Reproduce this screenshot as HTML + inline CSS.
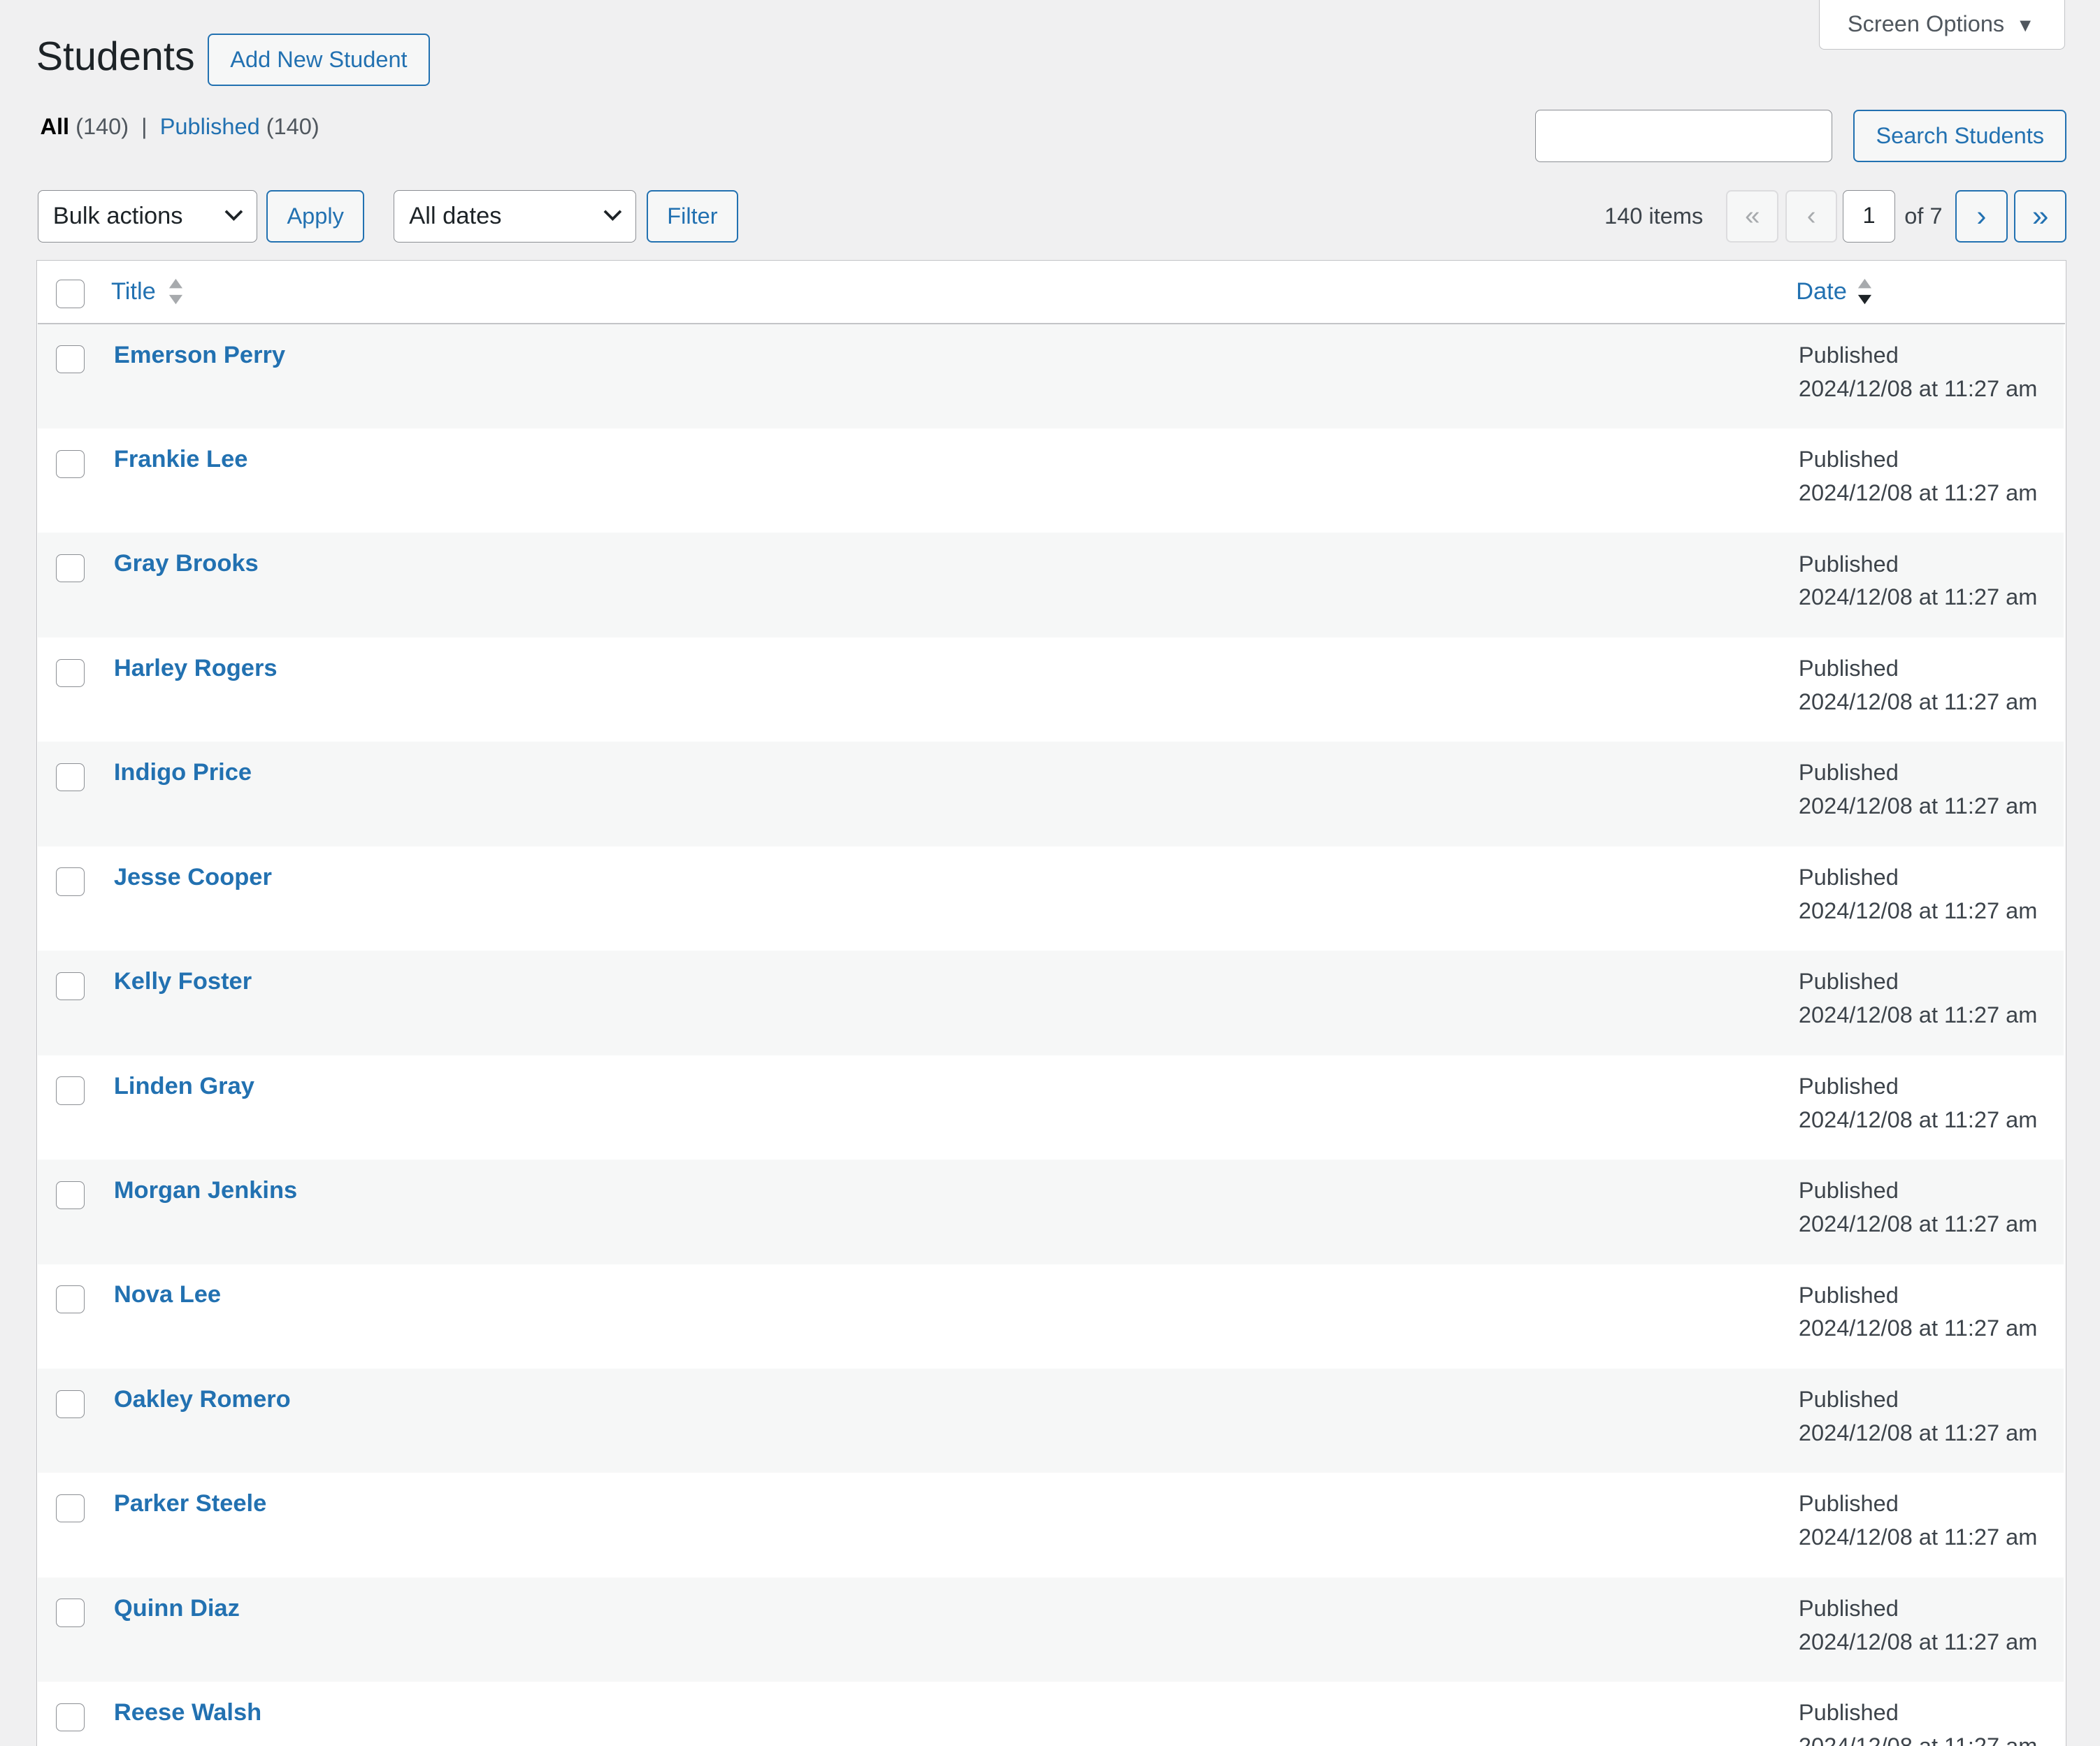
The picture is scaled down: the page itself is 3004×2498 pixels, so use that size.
<!DOCTYPE html>
<html><head><meta charset="utf-8">
<style>
html,body{margin:0;padding:0;background:#f0f0f1;overflow:hidden}
body{width:3004px;height:2498px}
#w{zoom:1.9158;width:1568px;height:1304px;position:relative;font-family:"Liberation Sans",Arial,sans-serif;font-size:17px;color:#3c434a;overflow:hidden}
.a{position:absolute}
.btn{position:absolute;box-sizing:border-box;border:1.2px solid #2271b1;background:#f6f7f7;color:#2271b1;border-radius:4px;height:39px;display:flex;align-items:center;justify-content:center;font-size:17px}
.dis{border-color:#dcdcde;color:#a7aaad}
.sel{position:absolute;box-sizing:border-box;border:1px solid #8c8f94;background:#fff;border-radius:4px;height:39px;color:#1d2327;font-size:18px;display:flex;align-items:center;padding-left:11px}
.sel svg{position:absolute;right:10px;top:13px}
.cb{position:absolute;box-sizing:border-box;width:21px;height:21px;border:1px solid #8c8f94;border-radius:4px;background:#fff}
.row{position:absolute;left:28px;width:1513px;height:78px}
.nm{position:absolute;left:57px;top:13px;font-weight:bold;color:#2271b1;font-size:18px}
.dt{position:absolute;left:1315px;top:11px;line-height:25px;font-size:17px;color:#3c434a}
</style></head><body><div id="w">
<div class="a" style="left:1358px;top:-5px;width:184px;height:42px;box-sizing:border-box;border:1px solid #c3c4c7;border-top:none;background:#fff;border-radius:0 0 4px 4px;color:#50575e;font-size:17px;line-height:46px;padding-left:21px">Screen Options <span style="font-size:14px;margin-left:4px">▼</span></div>
<div class="a" style="left:27px;top:25px;font-size:30px;color:#1d2327">Students</div>
<div class="btn" style="left:155px;top:25px;width:166px">Add New Student</div>
<div class="a" style="left:30px;top:85px;font-size:17px;color:#50575e"><b style="color:#000">All</b> (140) &nbsp;|&nbsp; <span style="color:#2271b1">Published</span> (140)</div>
<div class="a" style="left:1146px;top:82px;width:222px;height:39px;box-sizing:border-box;border:1px solid #8c8f94;border-radius:4px;background:#fff"></div>
<div class="btn" style="left:1384px;top:82px;width:159px">Search Students</div>
<div class="sel" style="left:28px;top:142px;width:164px">Bulk actions<svg width="14" height="10" viewBox="0 0 14 10"><path d="M1 2l6 6 6-6" fill="none" stroke="#1d2327" stroke-width="2"/></svg></div>
<div class="btn" style="left:199px;top:142px;width:73px">Apply</div>
<div class="sel" style="left:294px;top:142px;width:181px">All dates<svg width="14" height="10" viewBox="0 0 14 10"><path d="M1 2l6 6 6-6" fill="none" stroke="#1d2327" stroke-width="2"/></svg></div>
<div class="btn" style="left:483px;top:142px;width:68px">Filter</div>
<div class="a" style="left:1198px;top:152px;font-size:17px;color:#3c434a">140 items</div>
<div class="btn dis" style="left:1289px;top:142px;width:39px;font-size:20px">«</div>
<div class="btn dis" style="left:1333px;top:142px;width:39px;font-size:20px">‹</div>
<div class="a" style="left:1376px;top:142px;width:39px;height:39px;box-sizing:border-box;border:1px solid #8c8f94;border-radius:4px;background:#fff;text-align:center;line-height:37px;color:#1d2327;font-size:17px">1</div>
<div class="a" style="left:1422px;top:152px;font-size:17px">of 7</div>
<div class="btn" style="left:1460px;top:142px;width:39px;font-size:22px">›</div>
<div class="btn" style="left:1504px;top:142px;width:39px;font-size:22px">»</div>
<div class="a" style="left:27px;top:194px;width:1516px;height:1110px;box-sizing:border-box;border:1px solid #c3c4c7;border-bottom:none;background:#fff"></div>
<div class="a" style="left:28px;top:241px;width:1514px;height:1px;background:#c3c4c7"></div>
<div class="cb" style="left:42px;top:209px"></div>
<div class="a" style="left:83px;top:208px;color:#2271b1;font-size:18px">Title</div>
<svg class="a" style="left:125px;top:207px" width="13" height="22" viewBox="0 0 13 22"><path d="M6.5 1l5 7h-10z" fill="#a7aaad"/><path d="M6.5 20l5-7h-10z" fill="#a7aaad"/></svg>
<div class="a" style="left:1341px;top:208px;color:#2271b1;font-size:18px">Date</div>
<svg class="a" style="left:1386px;top:207px" width="13" height="22" viewBox="0 0 13 22"><path d="M6.5 1l5 7h-10z" fill="#a7aaad"/><path d="M6.5 20l5-7h-10z" fill="#1d2327"/></svg>
<div class="row" style="top:242px;background:#f6f7f7"><div class="cb" style="left:14px;top:16px"></div><div class="nm">Emerson Perry</div><div class="dt">Published<br>2024/12/08 at 11:27 am</div></div>
<div class="row" style="top:320px"><div class="cb" style="left:14px;top:16px"></div><div class="nm">Frankie Lee</div><div class="dt">Published<br>2024/12/08 at 11:27 am</div></div>
<div class="row" style="top:398px;background:#f6f7f7"><div class="cb" style="left:14px;top:16px"></div><div class="nm">Gray Brooks</div><div class="dt">Published<br>2024/12/08 at 11:27 am</div></div>
<div class="row" style="top:476px"><div class="cb" style="left:14px;top:16px"></div><div class="nm">Harley Rogers</div><div class="dt">Published<br>2024/12/08 at 11:27 am</div></div>
<div class="row" style="top:554px;background:#f6f7f7"><div class="cb" style="left:14px;top:16px"></div><div class="nm">Indigo Price</div><div class="dt">Published<br>2024/12/08 at 11:27 am</div></div>
<div class="row" style="top:632px"><div class="cb" style="left:14px;top:16px"></div><div class="nm">Jesse Cooper</div><div class="dt">Published<br>2024/12/08 at 11:27 am</div></div>
<div class="row" style="top:710px;background:#f6f7f7"><div class="cb" style="left:14px;top:16px"></div><div class="nm">Kelly Foster</div><div class="dt">Published<br>2024/12/08 at 11:27 am</div></div>
<div class="row" style="top:788px"><div class="cb" style="left:14px;top:16px"></div><div class="nm">Linden Gray</div><div class="dt">Published<br>2024/12/08 at 11:27 am</div></div>
<div class="row" style="top:866px;background:#f6f7f7"><div class="cb" style="left:14px;top:16px"></div><div class="nm">Morgan Jenkins</div><div class="dt">Published<br>2024/12/08 at 11:27 am</div></div>
<div class="row" style="top:944px"><div class="cb" style="left:14px;top:16px"></div><div class="nm">Nova Lee</div><div class="dt">Published<br>2024/12/08 at 11:27 am</div></div>
<div class="row" style="top:1022px;background:#f6f7f7"><div class="cb" style="left:14px;top:16px"></div><div class="nm">Oakley Romero</div><div class="dt">Published<br>2024/12/08 at 11:27 am</div></div>
<div class="row" style="top:1100px"><div class="cb" style="left:14px;top:16px"></div><div class="nm">Parker Steele</div><div class="dt">Published<br>2024/12/08 at 11:27 am</div></div>
<div class="row" style="top:1178px;background:#f6f7f7"><div class="cb" style="left:14px;top:16px"></div><div class="nm">Quinn Diaz</div><div class="dt">Published<br>2024/12/08 at 11:27 am</div></div>
<div class="row" style="top:1256px;height:48px;overflow:hidden"><div class="cb" style="left:14px;top:16px"></div><div class="nm">Reese Walsh</div><div class="dt">Published<br>2024/12/08 at 11:27 am</div></div>
</div></body></html>
